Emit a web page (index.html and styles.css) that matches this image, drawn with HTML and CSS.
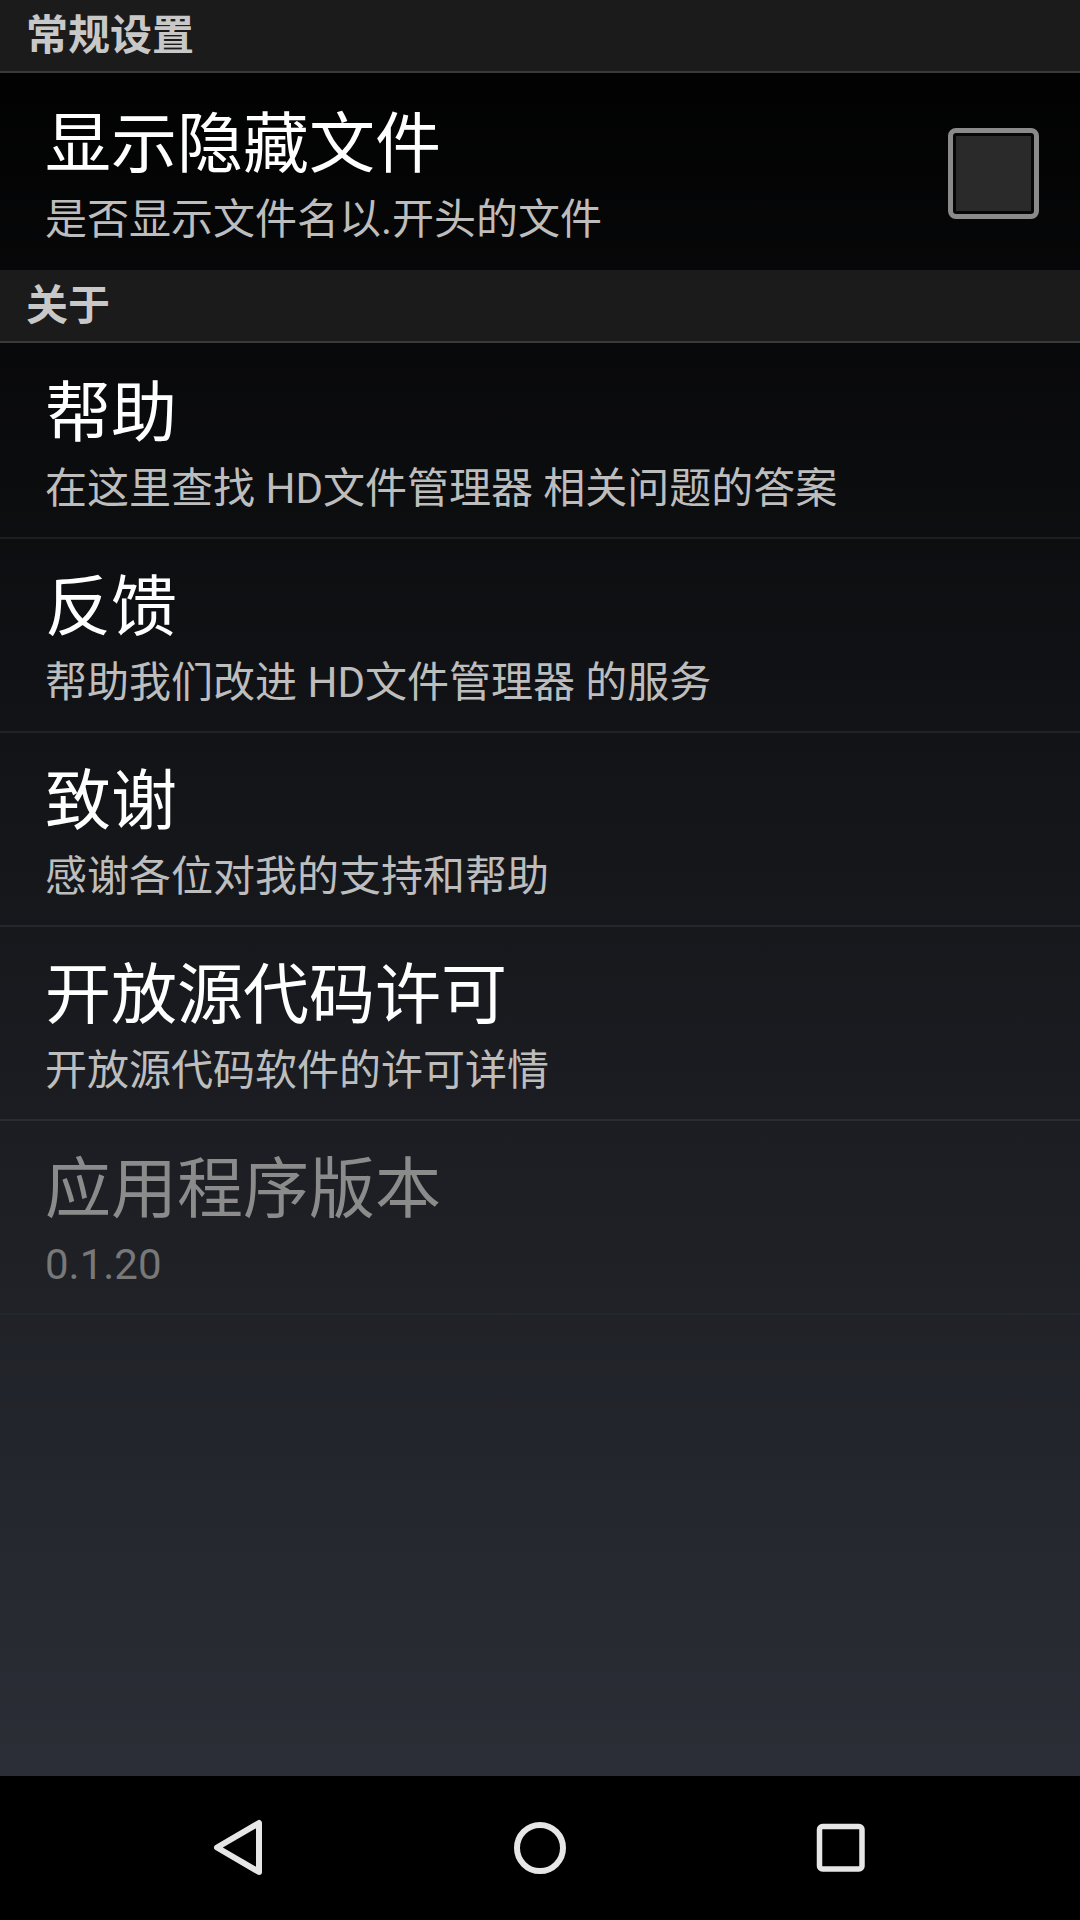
FILE: index.html
```html
<!DOCTYPE html>
<html lang="zh-CN">
<head>
<meta charset="utf-8">
<title>设置</title>
<link rel="stylesheet" href="styles.css">
</head>
<body>
<div class="screen">
  <main class="content">
    <div class="group-header">常规设置</div>
    <div class="row row-first">
      <div class="row-text">
        <div class="row-title">显示隐藏文件</div>
        <div class="row-summary">是否显示文件名以.开头的文件</div>
      </div>
      <div class="checkbox"></div>
    </div>
    <div class="group-header">关于</div>
    <div class="row">
      <div class="row-text">
        <div class="row-title">帮助</div>
        <div class="row-summary">在这里查找 HD文件管理器 相关问题的答案</div>
      </div>
    </div>
    <div class="row">
      <div class="row-text">
        <div class="row-title">反馈</div>
        <div class="row-summary">帮助我们改进 HD文件管理器 的服务</div>
      </div>
    </div>
    <div class="row">
      <div class="row-text">
        <div class="row-title">致谢</div>
        <div class="row-summary">感谢各位对我的支持和帮助</div>
      </div>
    </div>
    <div class="row">
      <div class="row-text">
        <div class="row-title">开放源代码许可</div>
        <div class="row-summary">开放源代码软件的许可详情</div>
      </div>
    </div>
    <div class="row row-disabled">
      <div class="row-text">
        <div class="row-title">应用程序版本</div>
        <div class="row-summary">0.1.20</div>
      </div>
    </div>
  </main>
  <nav class="navbar">
    <svg class="nav-icon" width="60" height="60" viewBox="0 0 60 60">
      <path d="M50 5 L50 54 L8 29.5 Z" fill="none" stroke="#e6e6e6" stroke-width="6" stroke-linejoin="round"/>
    </svg>
    <svg class="nav-icon" width="60" height="60" viewBox="0 0 60 60">
      <circle cx="30" cy="30" r="23" fill="none" stroke="#e6e6e6" stroke-width="6"/>
    </svg>
    <svg class="nav-icon" width="60" height="60" viewBox="0 0 60 60">
      <rect x="8.5" y="8.5" width="42.5" height="42.5" rx="3" fill="none" stroke="#e6e6e6" stroke-width="5.5"/>
    </svg>
  </nav>
</div>
</body>
</html>
```

FILE: styles.css
```css
html, body {
  margin: 0;
  padding: 0;
  background: #000;
}

body {
  width: 1080px;
  height: 1920px;
  overflow: hidden;
  font-family: Roboto, "Noto Sans CJK SC", sans-serif;
}

.screen {
  display: flex;
  flex-direction: column;
  height: 1920px;
}

.content {
  flex: 1;
  display: flex;
  flex-direction: column;
  background: linear-gradient(to bottom, #000000 0%, #2b2e36 100%);
}

.group-header {
  height: 71px;
  display: flex;
  align-items: center;
  padding-left: 26px;
  margin-bottom: 2px;
  background: #1b1b1b;
  border-bottom: 2px solid #3a3a3a;
  color: #c8c8c8;
  font-size: 42px;
  font-weight: bold;
  line-height: 71px;
}

.row {
  display: flex;
  align-items: center;
  height: 192px;
  padding: 0 41px 0 45px;
  border-bottom: 2px solid rgba(255, 255, 255, 0.065);
}

.row-first {
  height: 191px;
  padding-top: 2px;
  padding-bottom: 2px;
  border-bottom: none;
}

.row-text {
  flex: 1;
  display: flex;
  flex-direction: column;
  padding-top: 6px;
}

.row-title {
  font-size: 66px;
  line-height: 84px;
  color: #ffffff;
}

.row-summary {
  margin-top: 5px;
  font-size: 42px;
  line-height: 56px;
  color: #bdbdbd;
}

.row-disabled {
  border-bottom-color: rgba(255, 255, 255, 0.025);
}

.row-disabled .row-title {
  color: #8b8b8b;
}

.row-disabled .row-summary {
  color: #787878;
}

.checkbox {
  width: 91px;
  height: 91px;
  margin-top: 2px;
  box-sizing: border-box;
  border: 5px solid #8a8a8a;
  border-radius: 8px;
  background: #2a2a2a;
  box-shadow: inset 0 0 0 3px #060606;
}

.navbar {
  height: 144px;
  flex: none;
  background: #000;
  display: flex;
  align-items: center;
  justify-content: center;
  gap: 241px;
}

.nav-icon {
  display: block;
}
```
